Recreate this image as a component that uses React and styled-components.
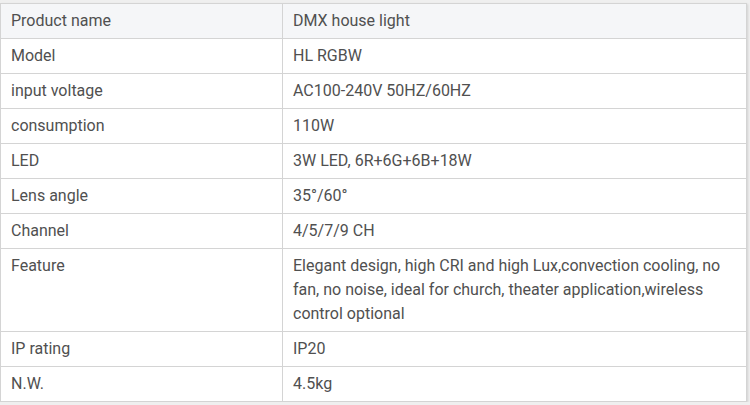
import React from "react";
import styled, { createGlobalStyle } from "styled-components";

const GlobalStyle = createGlobalStyle`
  html, body {
    margin: 0;
    padding: 0;
    background: #efefef;
  }
  body {
    padding-top: 3px;
    font-family: Roboto, "Liberation Sans", Arial, sans-serif;
  }
`;

const rows = [
  ["Model", "HL RGBW"],
  ["input voltage", "AC100-240V 50HZ/60HZ"],
  ["consumption", "110W"],
  ["LED", "3W LED, 6R+6G+6B+18W"],
  ["Lens angle", "35°/60°"],
  ["Channel", "4/5/7/9 CH"],
  [
    "Feature",
    "Elegant design, high CRI and high Lux,convection cooling, no fan, no noise, ideal for church, theater application,wireless control optional",
  ],
  ["IP rating", "IP20"],
  ["N.W.", "4.5kg"],
];

function App() {
  return (
    <>
      <GlobalStyle />
      <SpecTable>
        <colgroup>
          <col style={{ width: 282 }} />
          <col />
        </colgroup>
        <thead>
          <tr>
            <HeadCell>Product name</HeadCell>
            <HeadCell>DMX house light</HeadCell>
          </tr>
        </thead>
        <tbody>
          {rows.map(([label, value]) => (
            <tr key={label}>
              <Cell>{label}</Cell>
              <Cell>{value}</Cell>
            </tr>
          ))}
        </tbody>
      </SpecTable>
    </>
  );
}

export default App;

const SpecTable = styled.table`
  width: 747px;
  border-collapse: collapse;
  table-layout: fixed;
  background: #ffffff;
  border: 1px solid #cfcfcf;
  box-shadow: 1px 1px 2px rgba(0, 0, 0, 0.12);
`;

const Cell = styled.td`
  border: 1px solid #d4d4d4;
  padding: 5px 10px;
  font-size: 16px;
  line-height: 24px;
  color: #505050;
  text-align: left;
  vertical-align: top;
`;

const HeadCell = styled(Cell).attrs({ as: "th" })`
  font-weight: normal;
  background: #f5f6f8;
`;
